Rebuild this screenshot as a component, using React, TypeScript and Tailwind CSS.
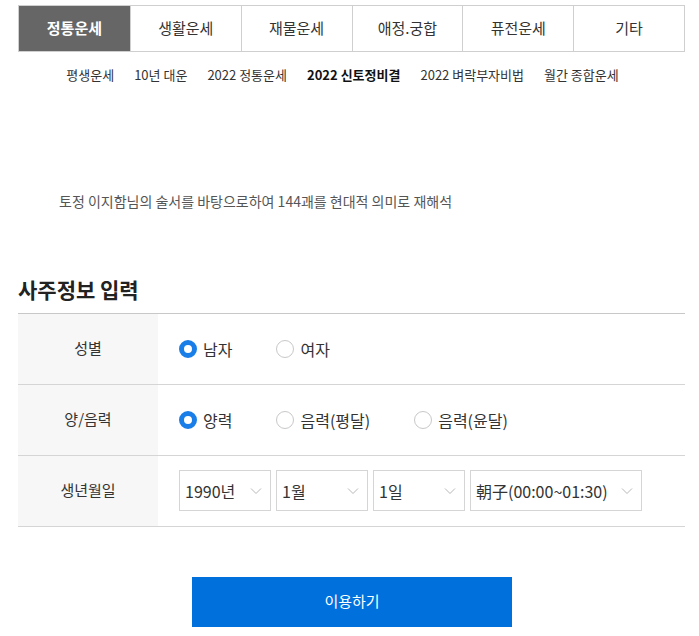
import { useState } from 'react';

const font = { fontFamily: '"Noto Sans CJK KR", "Noto Sans", sans-serif' };

const tabs = ['정통운세', '생활운세', '재물운세', '애정.궁합', '퓨전운세', '기타'];
const subTabs = ['평생운세', '10년 대운', '2022 정통운세', '2022 신토정비결', '2022 벼락부자비법', '월간 종합운세'];

function Radio({ checked, label, onClick }: { checked: boolean; label: string; onClick: () => void }) {
  return (
    <label className="flex items-center gap-[6px] cursor-pointer" onClick={onClick}>
      <span
        className={`w-[18px] h-[18px] rounded-full box-border ${
          checked ? 'border-[5px] border-[#1a7ee8] bg-white' : 'border border-[#c8c8c8] bg-white'
        }`}
      />
      <span className="text-[16px] text-[#333]">{label}</span>
    </label>
  );
}

function Select({ value, width }: { value: string; width: string }) {
  return (
    <div className={`${width} h-[41px] border border-[#d5d5d5] flex items-center justify-between pl-[5px] pr-[8px] bg-white`}>
      <span className="text-[16px] text-[#333]">{value}</span>
      <svg width="12" height="8" viewBox="0 0 12 8" fill="none">
        <path d="M1 1.5L6 6.5L11 1.5" stroke="#b8b8b8" strokeWidth="1" />
      </svg>
    </div>
  );
}

export default function App() {
  const [gender, setGender] = useState('m');
  const [cal, setCal] = useState('solar');

  return (
    <div className="w-[699px] h-[636px] bg-white overflow-hidden" style={font}>
      {/* 상단 탭 */}
      <div className="pt-[5px] pl-[18px] pr-[14px]">
        <div className="grid grid-cols-6 border border-[#cfcfcf] h-[47px]">
          {tabs.map((t, i) => (
            <div
              key={t}
              className={`flex items-center justify-center text-[15px] ${
                i === 0 ? 'bg-[#666666] text-white font-bold' : 'text-[#333] border-l border-[#cfcfcf]'
              }`}
            >
              {t}
            </div>
          ))}
        </div>
      </div>

      {/* 서브 메뉴 */}
      <div className="flex justify-center gap-[20px] mt-[13px] pl-[4px] pr-[18px] text-[13px] text-[#333]">
        {subTabs.map((s) => (
          <span key={s} className={s === '2022 신토정비결' ? 'font-bold text-[#111]' : ''}>
            {s}
          </span>
        ))}
      </div>

      <p className="mt-[106px] pl-[59px] text-[14px] text-[#555]">
        토정 이지함님의 술서를 바탕으로하여 144괘를 현대적 의미로 재해석
      </p>

      <div className="pl-[18px] pr-[14px]">
        <h2 className="mt-[62px] text-[21px] font-bold text-[#222] leading-[30px]">사주정보 입력</h2>

        <div className="mt-[9px] border-t border-[#c8c8c8]">
          {[
            {
              label: '성별',
              body: (
                <div className="flex items-center gap-[44px]">
                  <Radio checked={gender === 'm'} label="남자" onClick={() => setGender('m')} />
                  <Radio checked={gender === 'f'} label="여자" onClick={() => setGender('f')} />
                </div>
              ),
            },
            {
              label: '양/음력',
              body: (
                <div className="flex items-center gap-[44px]">
                  <Radio checked={cal === 'solar'} label="양력" onClick={() => setCal('solar')} />
                  <Radio checked={cal === 'lunar'} label="음력(평달)" onClick={() => setCal('lunar')} />
                  <Radio checked={cal === 'leap'} label="음력(윤달)" onClick={() => setCal('leap')} />
                </div>
              ),
            },
            {
              label: '생년월일',
              body: (
                <div className="flex items-center gap-[5px]">
                  <Select value="1990년" width="w-[92px]" />
                  <Select value="1월" width="w-[92px]" />
                  <Select value="1일" width="w-[92px]" />
                  <Select value="朝子(00:00~01:30)" width="w-[172px]" />
                </div>
              ),
            },
          ].map((row) => (
            <div key={row.label} className="flex h-[71px] border-b border-[#d5d5d5]">
              <div className="w-[140px] bg-[#f7f7f7] flex items-center justify-center text-[15px] text-[#333]">
                {row.label}
              </div>
              <div className="flex-1 flex items-center pl-[21px]">{row.body}</div>
            </div>
          ))}
        </div>
      </div>

      <div className="flex justify-center mt-[50px]">
        <button className="w-[320px] h-[50px] bg-[#0070dd] text-white text-[15px] ml-[5px]">이용하기</button>
      </div>
    </div>
  );
}
